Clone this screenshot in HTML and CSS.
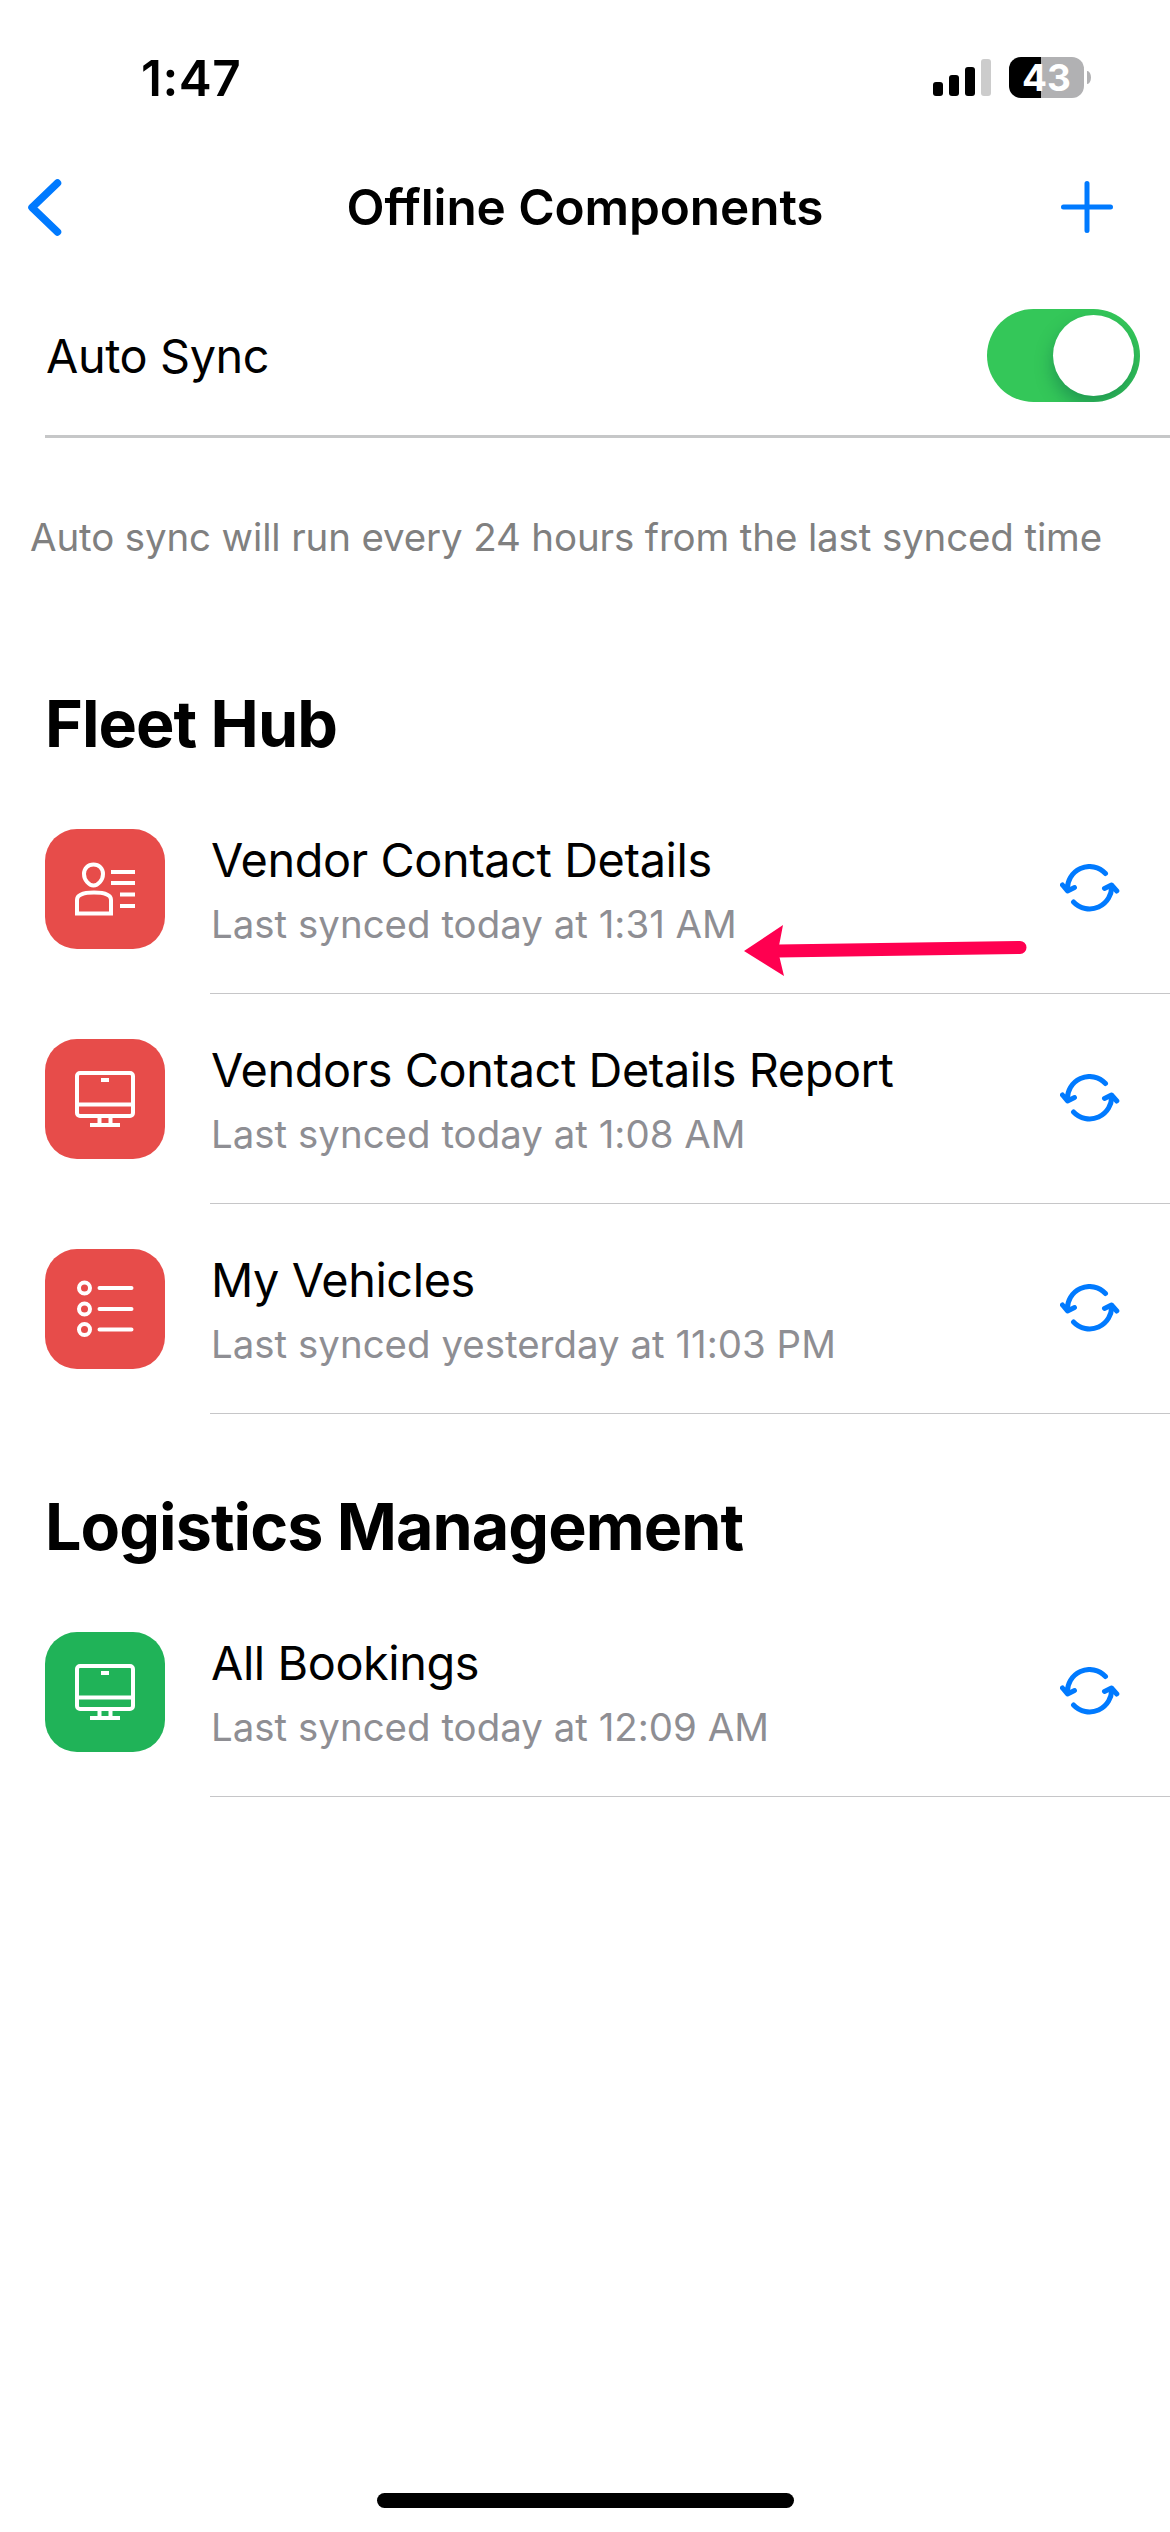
FILE: index.html
```
<!DOCTYPE html>
<html lang="en">
<head>
	<meta charset="UTF-8">
	<title>Offline Components</title>
	<link rel="stylesheet" href="styles.css">
</head>
<body>
	<svg class="defs" width="0" height="0">
		<symbol id="sync" viewBox="0 0 60 50">
			<path d="M45.500 9.500A22 22 0 0 0 7.500 26.500M2.500 21l5 6 7-3.500M13.500 38a22 22 0 0 0 38-17M44.500 24.500l7-3.500 5.300 6"/>
		</symbol>
		<symbol id="monitor" viewBox="0 0 120 120">
			<rect x="32" y="34" width="56" height="43" rx="3"/>
			<path d="M32 65.500h56M56 41h8M54.500 77v8M65.500 77v8M45 86h30"/>
		</symbol>
	</svg>
	<div class="status">
		<span class="time">1:47</span>
		<div class="signal"><i></i><i></i><i></i><i></i></div>
		<div class="battery">43</div>
	</div>
	<div class="navbar">
		<svg class="back" viewBox="0 0 37 61"><path d="M31.500 6L6 30.500 31.500 55"/></svg>
		<h1>Offline Components</h1>
		<svg class="add" viewBox="0 0 54 54"><path d="M27 3.500v47M3.500 27h47"/></svg>
	</div>
	<div class="auto">
		<span class="name">Auto Sync</span>
		<div class="switch"><div class="knob"></div></div>
	</div>
	<p class="hint">Auto sync will run every 24 hours from the last synced time</p>

	<h2>Fleet Hub</h2>
	<ul class="list">
		<li>
			<svg class="icon red" viewBox="0 0 120 120">
				<path d="M48.500 35.500c5.500 0 9.500 4 9.500 9.500 0 6-5 11.500-9.500 11.500S39 51 39 45c0-5.500 4-9.500 9.500-9.500zM32 84.500V71c0-5 6-7.500 17-7.500S66 66 66 71v13.500zM66 43h24M66 54h24M75 65.500h15M75 77h15"/>
			</svg>
			<div class="text"><span class="name">Vendor Contact Details</span><span class="time-ago">Last synced today at 1:31 AM</span></div>
			<svg class="sync"><use href="#sync"/></svg>
			<svg class="arrow" viewBox="0 0 286 54"><path class="line" d="M34 27L276 23.500"/><path class="head" d="M0 27L39 1 34 27 40 52z"/></svg>
		</li>
		<li>
			<svg class="icon red"><use href="#monitor"/></svg>
			<div class="text"><span class="name">Vendors Contact Details Report</span><span class="time-ago">Last synced today at 1:08 AM</span></div>
			<svg class="sync"><use href="#sync"/></svg>
		</li>
		<li>
			<svg class="icon red" viewBox="0 0 120 120">
				<circle cx="39.500" cy="39" r="5.500"/><circle cx="39.500" cy="60" r="5.500"/><circle cx="39.500" cy="80.500" r="5.500"/>
				<path stroke-linecap="round" d="M54.500 39h32M54.500 60h32M54.500 80.500h32"/>
			</svg>
			<div class="text"><span class="name">My Vehicles</span><span class="time-ago">Last synced yesterday at 11:03 PM</span></div>
			<svg class="sync"><use href="#sync"/></svg>
		</li>
	</ul>

	<h2>Logistics Management</h2>
	<ul class="list">
		<li>
			<svg class="icon green"><use href="#monitor"/></svg>
			<div class="text"><span class="name">All Bookings</span><span class="time-ago">Last synced today at 12:09 AM</span></div>
			<svg class="sync"><use href="#sync"/></svg>
		</li>
	</ul>
	<div class="home"></div>
</body>
</html>
```
FILE: styles.css
```
*{box-sizing:border-box;}
body,h1,h2,p,ul,li{margin:0;padding:0;list-style:none;}
body{
	position:relative;
	height:2532px;
	background:#fff;
	color:#000;
	font-family:Inter,"Liberation Sans",sans-serif;
	overflow:hidden;
}
svg{
	display:block;
	fill:none;
	flex:none;
}
.defs{position:absolute;}

.status{
	display:flex;
	height:156px;
	padding:57px 79px 0 141px;
}
.time{
	flex:1;
	font-size:49.5px;
	line-height:42px;
	font-weight:600;
	letter-spacing:.5px;
}
.signal{
	display:flex;
	align-items:flex-end;
	gap:6px;
	height:39px;
	margin-right:18px;
}
.signal i{
	width:10px;
	height:14px;
	border-radius:3px;
	background:#000;
}
.signal i:nth-child(2){height:21px;}
.signal i:nth-child(3){height:29px;}
.signal i:nth-child(4){height:37px;background:#ccc;}
.battery{
	position:relative;
	width:75px;
	height:41px;
	margin-right:7px;
	border-radius:12px;
	background:linear-gradient(90deg,#000 32px,#b1b1b3 32px);
	color:#fff;
	font-size:37px;
	line-height:41px;
	font-weight:700;
	text-align:center;
}
.battery:after{
	content:"";
	position:absolute;
	left:78px;
	top:14px;
	width:4px;
	height:13px;
	border-radius:0 4px 4px 0/0 7px 7px 0;
	background:#b1b1b3;
}

.navbar{
	display:grid;
	grid-template-columns:1fr auto 1fr;
	align-items:center;
	height:102px;
}
.back{width:37px;height:61px;margin-left:26px;}
.add{width:54px;height:54px;margin:0 56px 0 auto;}
.navbar path{
	stroke:#007aff;
	stroke-width:7.5;
	stroke-linecap:round;
	stroke-linejoin:round;
}
.navbar .add path{stroke-width:5;}
h1{
	font-size:49.5px;
	line-height:60px;
	font-weight:600;
	letter-spacing:-.1px;
}

.auto{
	display:flex;
	justify-content:space-between;
	align-items:center;
	height:180px;
	margin-left:45px;
	padding:18px 30px 0 1px;
	border-bottom:3px solid #c6c7c8;
}
.name{
	font-size:46.8px;
	line-height:56px;
	letter-spacing:-.4px;
}
.switch{
	width:153px;
	height:93px;
	padding:6px;
	border-radius:47px;
	background:#34c759;
	overflow:hidden;
}
.knob{
	width:81px;
	height:81px;
	margin-left:auto;
	border-radius:50%;
	background:#fff;
	box-shadow:0 9px 18px rgba(0,80,70,.4);
}
.hint{
	height:217px;
	padding:75px 0 0 30px;
	color:#808080;
	font-size:38.5px;
	line-height:48px;
	letter-spacing:-.14px;
	white-space:nowrap;
}

h2{
	height:129px;
	padding-left:45px;
	font-size:64.6px;
	line-height:137px;
	font-weight:700;
	letter-spacing:-.95px;
}
.list{margin-bottom:44px;}
.list li{
	position:relative;
	display:flex;
	align-items:center;
	height:210px;
	padding:0 50px 0 45px;
}
.list li:after{
	content:"";
	position:absolute;
	left:210px;
	right:0;
	bottom:0;
	height:1px;
	background:#c6c6c8;
}
.icon{
	width:120px;
	height:120px;
	margin-right:46px;
	border-radius:32px;
	stroke:#fff;
	stroke-width:4;
}
.red{background:#e74c4a;}
.green{background:#20b358;}
.text{
	display:flex;
	flex-direction:column;
	flex:1;
	gap:12px;
	padding-top:2px;
	white-space:nowrap;
}
.time-ago{
	color:#8e8e93;
	font-size:38.4px;
	line-height:48px;
	letter-spacing:.03px;
}
.sync{
	width:60px;
	height:50px;
	stroke:#007aff;
	stroke-width:5;
	stroke-linecap:round;
	stroke-linejoin:round;
}
/* pointer to the last sync time */
.arrow{
	position:absolute;
	left:744px;
	top:140px;
	width:286px;
	height:54px;
}
.line{
	stroke:#ff0050;
	stroke-width:13;
	stroke-linecap:round;
}
.head{fill:#ff0050;}

.home{
	position:absolute;
	left:377px;
	bottom:24px;
	width:417px;
	height:15px;
	border-radius:8px;
	background:#000;
}
```
